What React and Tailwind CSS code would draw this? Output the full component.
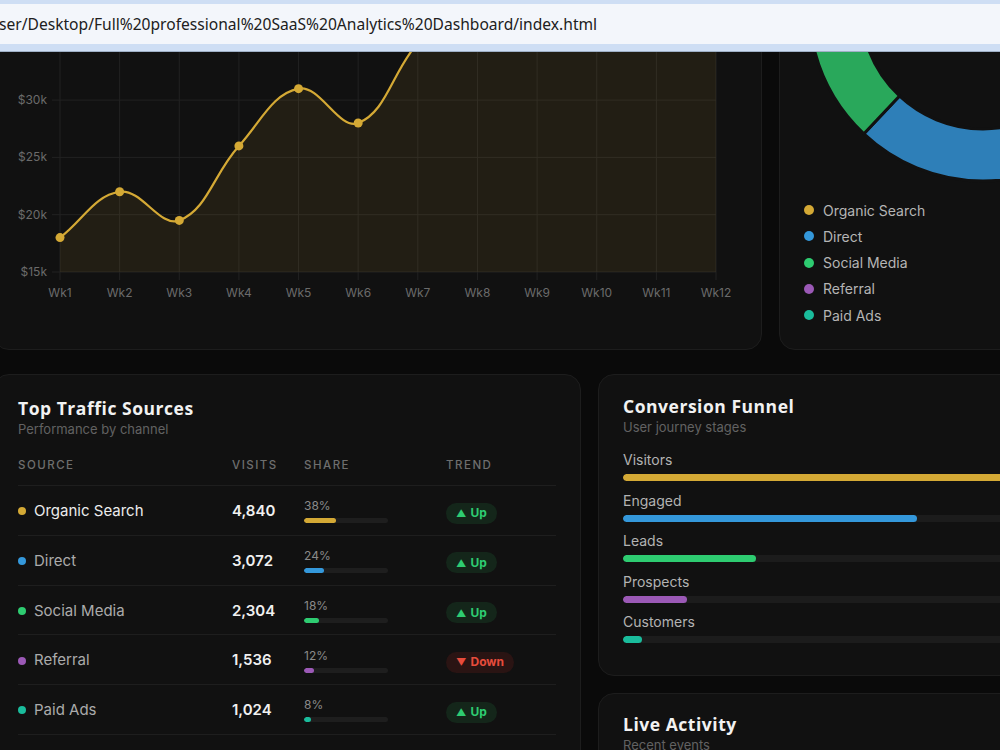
import React from "react";

const weeks = ["Wk1", "Wk2", "Wk3", "Wk4", "Wk5", "Wk6", "Wk7", "Wk8", "Wk9", "Wk10", "Wk11", "Wk12"];
// weekly revenue in $k
const revenue = [18, 22, 19.5, 26, 31, 28, 35, 40, 38.5, 43, 45, 48];

const X0 = 60;
const X1 = 716;
const Y_BASE = 272; // $15k line
const PX_PER_K = 11.46;
const xAt = (i) => X0 + (i * (X1 - X0)) / 11;
const yAt = (v) => Y_BASE - (v - 15) * PX_PER_K;

const GOLD = "#d4a935";

function splinePath(points, tension = 0.4) {
  const ctrl = points.map((cur, i) => {
    const prev = points[i - 1] || cur;
    const next = points[i + 1] || cur;
    const d01 = Math.hypot(cur.x - prev.x, cur.y - prev.y);
    const d12 = Math.hypot(next.x - cur.x, next.y - cur.y);
    const sum = d01 + d12 || 1;
    const fa = (tension * d01) / sum;
    const fb = (tension * d12) / sum;
    return {
      prev: { x: cur.x - fa * (next.x - prev.x), y: cur.y - fa * (next.y - prev.y) },
      next: { x: cur.x + fb * (next.x - prev.x), y: cur.y + fb * (next.y - prev.y) },
    };
  });
  let d = `M ${points[0].x} ${points[0].y}`;
  for (let i = 0; i < points.length - 1; i++) {
    const a = ctrl[i].next;
    const b = ctrl[i + 1].prev;
    const p = points[i + 1];
    d += ` C ${a.x} ${a.y} ${b.x} ${b.y} ${p.x} ${p.y}`;
  }
  return d;
}

function RevenueChart() {
  const pts = revenue.map((v, i) => ({ x: xAt(i), y: yAt(v) }));
  const line = splinePath(pts);
  const area = `${line} L ${X1} ${Y_BASE} L ${X0} ${Y_BASE} Z`;
  const gridTicks = [15, 20, 25, 30, 35];
  const labelTicks = [15, 20, 25, 30];
  return (
    <svg width="767" height="398" viewBox="-6 -49 767 398" className="block">
      {/* grid */}
      {weeks.map((w, i) => (
        <line key={w} x1={xAt(i)} x2={xAt(i)} y1={-49} y2={280} stroke="#222" strokeWidth="1" />
      ))}
      {gridTicks.map((t) => (
        <line key={t} x1={52} x2={X1} y1={yAt(t)} y2={yAt(t)} stroke="#222" strokeWidth="1" />
      ))}
      <path d={area} fill={GOLD} fillOpacity="0.09" />
      <path d={line} fill="none" stroke={GOLD} strokeWidth="2.2" />
      {pts.map((p, i) => (
        <circle key={i} cx={p.x} cy={p.y} r="4.5" fill={GOLD} />
      ))}
      {labelTicks.map((t) => (
        <text
          key={t}
          x={47}
          y={yAt(t) + 4}
          textAnchor="end"
          fontFamily="Inter, sans-serif"
          fontSize="12"
          fill="#6b6b6b"
        >
          ${t}k
        </text>
      ))}
      {weeks.map((w, i) => (
        <text
          key={w}
          x={xAt(i)}
          y={297}
          textAnchor="middle"
          fontFamily="Inter, sans-serif"
          fontSize="12"
          fill="#6b6b6b"
        >
          {w}
        </text>
      ))}
    </svg>
  );
}

const channels = [
  { name: "Organic Search", visits: "4,840", share: 38, color: "#d4a935", donut: "#c9a133", up: true },
  { name: "Direct", visits: "3,072", share: 24, color: "#3498db", donut: "#2e7fb8", up: true },
  { name: "Social Media", visits: "2,304", share: 18, color: "#2ecc71", donut: "#29a85b", up: true },
  { name: "Referral", visits: "1,536", share: 12, color: "#9b59b6", donut: "#8a52a3", up: false },
  { name: "Paid Ads", visits: "1,024", share: 8, color: "#1abc9c", donut: "#1aa58a", up: true },
];

function arcPath(cx, cy, R, r, a0, a1) {
  const rad = (a) => (a * Math.PI) / 180;
  const p = (rr, a) => [cx + rr * Math.cos(rad(a)), cy + rr * Math.sin(rad(a))];
  const large = a1 - a0 > 180 ? 1 : 0;
  const [ox0, oy0] = p(R, a0);
  const [ox1, oy1] = p(R, a1);
  const [ix1, iy1] = p(r, a1);
  const [ix0, iy0] = p(r, a0);
  return `M ${ox0} ${oy0} A ${R} ${R} 0 ${large} 1 ${ox1} ${oy1} L ${ix1} ${iy1} A ${r} ${r} 0 ${large} 0 ${ix0} ${iy0} Z`;
}

function Donut() {
  const cx = 983;
  const cy = 7;
  let start = -90;
  return (
    <svg width="418" height="246" viewBox="780 -49 418 246" className="block shrink-0">
      {channels.map((c) => {
        const sweep = (c.share / 100) * 360;
        const d = arcPath(cx, cy, 174, 122, start, start + sweep);
        start += sweep;
        return <path key={c.name} d={d} fill={c.donut} stroke="#111" strokeWidth="3" strokeLinejoin="round" />;
      })}
    </svg>
  );
}

function Card({ className = "", children }) {
  return (
    <div className={`rounded-2xl border border-[#1d1d1d] bg-[#111111] overflow-hidden shrink-0 ${className}`}>
      {children}
    </div>
  );
}

function CardTitle({ title, sub }) {
  return (
    <div>
      <div className="font-[family-name:'Open_Sans',sans-serif] font-bold text-[17.5px] leading-[20px] text-[#f2f2f2] tracking-[0.03em]">
        {title}
      </div>
      <div className="mt-[2px] text-[13px] leading-[18px] text-[#626262]">{sub}</div>
    </div>
  );
}

function TrendPill({ up }) {
  return up ? (
    <span className="inline-flex items-center h-[21px] px-[10px] rounded-full bg-[#14261a] text-[#2ecc71] text-[12px] font-bold leading-none">
      <span className="text-[10px] mr-[4px]">▲</span>Up
    </span>
  ) : (
    <span className="inline-flex items-center h-[21px] px-[10px] rounded-full bg-[#2a1413] text-[#e74c3c] text-[12px] font-bold leading-none">
      <span className="text-[10px] mr-[4px]">▼</span>Down
    </span>
  );
}

function TrafficCard() {
  return (
    <Card className="w-[588px] h-[420px] px-[24px] pt-[23px]">
      <CardTitle title="Top Traffic Sources" sub="Performance by channel" />
      <div className="mt-[18px] grid grid-cols-[214px_72px_142px_1fr] h-[30px] items-start border-b border-[#1e1e1e] text-[11.5px] leading-[18px] tracking-[0.13em] text-[#6e6e6e] font-medium">
        <div>SOURCE</div>
        <div>VISITS</div>
        <div>SHARE</div>
        <div>TREND</div>
      </div>
      {channels.map((c, i) => (
        <div
          key={c.name}
          className="grid grid-cols-[214px_72px_142px_1fr] h-[49.75px] pt-[2px] items-center border-b border-[#1e1e1e]"
        >
          <div className="flex items-center gap-[8px]">
            <span className="w-[8px] h-[8px] rounded-full" style={{ backgroundColor: c.color }} />
            <span className={`text-[15px] ${i === 0 ? "text-[#ececec]" : "text-[#ababab]"}`}>{c.name}</span>
          </div>
          <div className="text-[15px] font-semibold text-[#f0f0f0]">{c.visits}</div>
          <div className="flex flex-col gap-[5px]">
            <span className="text-[12px] leading-[14px] text-[#8a8a8a]">{c.share}%</span>
            <div className="w-[84px] h-[5px] rounded-full bg-[#1e1e1e] overflow-hidden">
              <div className="h-full rounded-full" style={{ width: `${c.share}%`, backgroundColor: c.color }} />
            </div>
          </div>
          <div>
            <TrendPill up={c.up} />
          </div>
        </div>
      ))}
    </Card>
  );
}

const funnel = [
  { label: "Visitors", pct: 100, color: "#d4a935" },
  { label: "Engaged", pct: 65, color: "#3498db" },
  { label: "Leads", pct: 29.5, color: "#2ecc71" },
  { label: "Prospects", pct: 14.1, color: "#9b59b6" },
  { label: "Customers", pct: 4.2, color: "#1abc9c" },
];

function FunnelCard() {
  return (
    <Card className="w-[502px] px-[24px] pt-[21px] pb-[32px]">
      <CardTitle title="Conversion Funnel" sub="User journey stages" />
      <div className="mt-[15px] flex flex-col gap-[10.5px]">
        {funnel.map((f) => (
          <div key={f.label}>
            <div className="text-[14px] leading-[18px] text-[#b3b3b3]">{f.label}</div>
            <div className="mt-[5px] h-[7px] rounded-full bg-[#1c1c1c] overflow-hidden">
              <div className="h-full rounded-full" style={{ width: `${f.pct}%`, backgroundColor: f.color }} />
            </div>
          </div>
        ))}
      </div>
    </Card>
  );
}

function LiveCard() {
  return (
    <Card className="w-[502px] h-[200px] px-[24px] pt-[20px]">
      <CardTitle title="Live Activity" sub="Recent events" />
    </Card>
  );
}

function AddressBar() {
  return (
    <div className="h-[52px] shrink-0 bg-[#cedef4] pt-[4px] pb-[7px] border-b border-[#9fb0c6]">
      <div className="h-full bg-[#f3f6fb] flex items-center pt-[2px] overflow-hidden whitespace-nowrap">
        <span className="-ml-[1px] font-[family-name:'Noto_Sans',sans-serif] text-[15.6px] text-[#202020]">
          ser/Desktop/Full%20professional%20SaaS%20Analytics%20Dashboard/index.html
        </span>
      </div>
    </div>
  );
}

export default function App() {
  return (
    <div className="w-[1000px] h-[750px] overflow-hidden bg-[#0a0a0a] flex flex-col font-[family-name:Inter,sans-serif]">
      <AddressBar />
      <div className="flex-1 min-h-0 overflow-hidden">
        <div className="-mt-[102px] -ml-[7px] w-[1300px] flex flex-col gap-[24px]">
          <div className="flex gap-[17px] items-start">
            <Card className="w-[769px] h-[400px]">
              <RevenueChart />
            </Card>
            <Card className="w-[420px] h-[400px] flex flex-col">
              <Donut />
              <div className="px-[24px] flex flex-col">
                {channels.map((c) => (
                  <div key={c.name} className="h-[26.25px] flex items-center gap-[9px]">
                    <span className="w-[10px] h-[10px] rounded-full" style={{ backgroundColor: c.color }} />
                    <span className="text-[14px] text-[#b5b5b5]">{c.name}</span>
                  </div>
                ))}
              </div>
            </Card>
          </div>
          <div className="flex gap-[17px] items-start">
            <TrafficCard />
            <div className="flex flex-col gap-[17px]">
              <FunnelCard />
              <LiveCard />
            </div>
          </div>
        </div>
      </div>
    </div>
  );
}
